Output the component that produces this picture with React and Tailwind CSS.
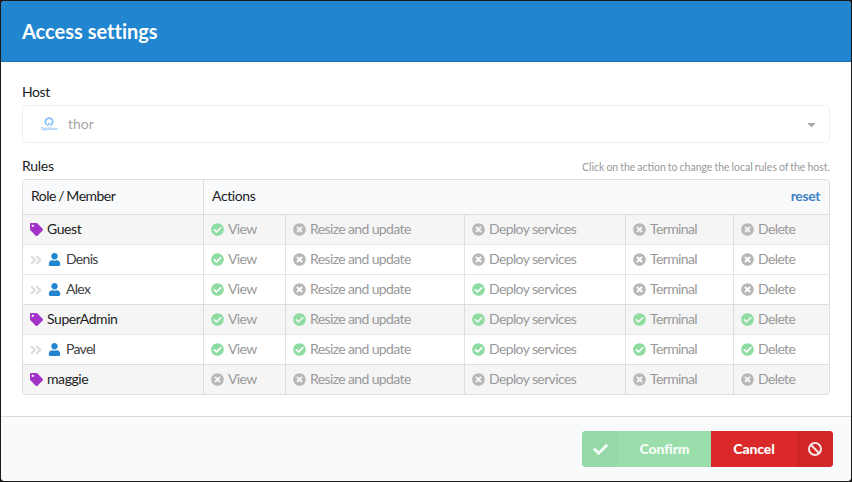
import React from "react";
import {
  FaTag,
  FaUser,
  FaCheckCircle,
  FaTimesCircle,
  FaAngleDoubleRight,
  FaCheck,
  FaCaretDown,
} from "react-icons/fa";

const ACTIONS = ["View", "Resize and update", "Deploy services", "Terminal", "Delete"];

const ROWS = [
  { name: "Guest", role: true, allowed: [1, 0, 0, 0, 0] },
  { name: "Denis", role: false, allowed: [1, 0, 0, 0, 0] },
  { name: "Alex", role: false, allowed: [1, 0, 1, 0, 0] },
  { name: "SuperAdmin", role: true, allowed: [1, 1, 1, 1, 1] },
  { name: "Pavel", role: false, allowed: [1, 1, 1, 1, 1] },
  { name: "maggie", role: true, allowed: [0, 0, 0, 0, 0] },
];

const COLUMNS = "grid grid-cols-[180px_82px_179px_161px_108px_1fr]";

function HostLogo() {
  return (
    <svg width="18" height="16" viewBox="0 0 18 16" className="ml-[17px]">
      <path d="M6.6 8.6A3.7 3.7 0 1 1 11.6 8.4" fill="none" stroke="#84c0f9" strokeWidth="1.8" />
      <path d="M6.3 7.8L7.8 10L9.2 6.8L10.6 9.8L12 8" fill="none" stroke="#84c0f9" strokeWidth="1" />
      <text x="0.8" y="14.2" fontSize="3.4" fontFamily="Lato, sans-serif" fontWeight="700" fill="#84c0f9" textLength="16.6">
        DigitalOcean
      </text>
    </svg>
  );
}

function BanIcon() {
  return (
    <svg width="14" height="14" viewBox="0 0 14 14" fill="none" stroke="#fae6e6" strokeWidth="2">
      <circle cx="7" cy="7" r="6" />
      <path d="M2.8 2.8L11.2 11.2" />
    </svg>
  );
}

function RoleCell({ row }) {
  if (row.role) {
    return (
      <div className="flex items-center pl-[7px] tracking-[-0.42px] text-[#1b1c1d]">
        <FaTag size={13} className="mr-[4px] shrink-0 text-[#a333c8]" />
        <span className="-mt-0.5">{row.name}</span>
      </div>
    );
  }
  return (
    <div className="flex items-center pl-[6px] tracking-[-0.7px] text-[#404041]">
      <FaAngleDoubleRight size={14} className="mr-[4px] shrink-0 text-[#dcddde]" />
      <FaUser size={13} className="ml-[1px] mr-[5px] shrink-0 text-[#2185d0]" />
      <span className="-mt-0.5">{row.name}</span>
    </div>
  );
}

function ActionCell({ label, allowed }) {
  return (
    <div className="flex items-center border-l border-[#22242620] pl-[7px] tracking-[-0.62px] text-[#999999]">
      {allowed ? (
        <FaCheckCircle size={13} className="mr-1 shrink-0 text-[#8fdca2]" />
      ) : (
        <FaTimesCircle size={13} className="mr-1 shrink-0 text-[#b8b8b8]" />
      )}
      <span className="-mt-0.5">{label}</span>
    </div>
  );
}

export default function App() {
  return (
    <div className="h-[482px] w-[852px] overflow-hidden bg-[#1a1a1c] p-px font-['Lato',sans-serif] text-[14px] leading-[18px] text-[#1b1c1d]">
      <div className="flex h-[480px] flex-col overflow-hidden rounded-[4px] bg-white">
        <header className="flex h-[61px] items-center border-b border-[#1f70b3] bg-[#2185d0] px-[21px] text-[20px] font-bold text-white [font-variant-ligatures:none]">
          Access settings
        </header>

        <main className="flex-1 px-[21px] pt-[21px]">
          <div className="h-[22px] tracking-[-0.4px]">Host</div>
          <div className="flex h-[38px] items-center rounded-[4px] border border-[#efeff0] text-[#a6a6a6]">
            <HostLogo />
            <span className="ml-[10px] flex-1">thor</span>
            <FaCaretDown size={13} className="mr-[11px] text-[#a9a9a9]" />
          </div>

          <div className="mt-[14px] flex h-[22px] justify-between">
            <span className="tracking-[-0.25px]">Rules</span>
            <span className="pt-px text-[10.5px] text-[#999999] [word-spacing:-0.7px]">
              Click on the action to change the local rules of the host.
            </span>
          </div>

          <div className="h-[216px] overflow-hidden rounded-[4px] border border-[#dededf]">
            <div className="grid h-[34px] grid-cols-[180px_1fr] bg-[#f9fafb] tracking-[-0.4px]">
              <div className="flex items-center pb-0.5 pl-[8px] tracking-[-0.5px] [word-spacing:-0.8px]">Role / Member</div>
              <div className="flex items-center justify-between border-l border-[#dededf] pb-0.5 pl-[8px] pr-[9px]">
                <span>Actions</span>
                <span className="font-bold text-[#4183c4]">reset</span>
              </div>
            </div>
            {ROWS.map((row) => (
              <div
                key={row.name}
                className={`${COLUMNS} h-[30px] border-t ${
                  row.role ? "border-[#dededf] bg-[#f5f5f5]" : "border-[#e6e6e7] bg-white"
                }`}
              >
                <RoleCell row={row} />
                {ACTIONS.map((label, i) => (
                  <ActionCell key={label} label={label} allowed={row.allowed[i]} />
                ))}
              </div>
            ))}
          </div>
        </main>

        <footer className="flex h-[65px] items-start justify-end border-t border-[#d9dadb] bg-[#f9fafb] pr-[18px] pt-[14px]">
          <div className="flex h-[36px] overflow-hidden rounded-[4px] font-black tracking-[-0.1px] text-white">
            <button className="flex w-[129px] bg-[#9adeac]">
              <span className="flex h-[36px] w-[36px] items-center justify-center bg-[#96d9a8]">
                <FaCheck size={15} className="text-[#f4fbf6]" />
              </span>
              <span className="flex h-[36px] flex-1 items-center justify-center text-[#f8fdf9]">Confirm</span>
            </button>
            <button className="flex w-[122px] bg-[#db2828]">
              <span className="flex h-[36px] flex-1 items-center justify-center">Cancel</span>
              <span className="flex h-[36px] w-[36px] items-center justify-center bg-[#d02626]">
                <BanIcon />
              </span>
            </button>
          </div>
        </footer>
      </div>
    </div>
  );
}
